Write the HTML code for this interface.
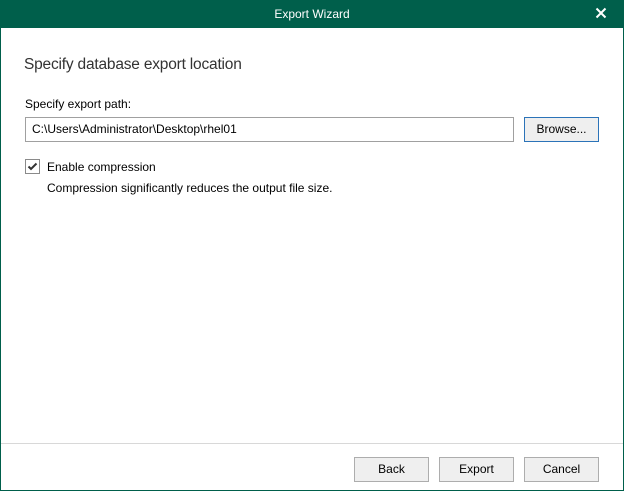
<!DOCTYPE html>
<html><head><style>
*{margin:0;padding:0;box-sizing:border-box}
body{width:624px;height:491px;background:#fff;font-family:"Segoe UI","Liberation Sans",sans-serif;font-size:12px;color:#000;position:relative;overflow:hidden}
.win{position:absolute;left:0;top:0;width:624px;height:491px;border:1px solid #005f4b}
.title{position:absolute;left:0;top:0;width:624px;height:28px;background:#005f4b;color:#fff;text-align:center;line-height:28px;font-size:12px}
.x{position:absolute;right:17px;top:7px}
.abs{position:absolute;white-space:nowrap}
.btn{position:absolute;height:25px;background:#efefef;border:1px solid #adadad;text-align:center;line-height:23px;font-size:12px}
</style></head><body>
<div class="win"></div>
<div class="title">Export Wizard
<svg class="x" width="12" height="12" viewBox="0 0 12 12"><path d="M1.5 1.5L10.5 10.5M10.5 1.5L1.5 10.5" stroke="#fff" stroke-width="2"/></svg></div>
<div class="abs" style="left:24px;top:56px;font-size:15.5px;color:#333;letter-spacing:-0.2px">Specify database export location</div>
<div class="abs" style="left:25px;top:97px">Specify export path:</div>
<div class="abs" style="left:25px;top:117px;width:489px;height:25px;border:1px solid #a0a0a0;padding-left:6px;line-height:23px">C:\Users\Administrator\Desktop\rhel01</div>
<div class="btn" style="left:524px;top:117px;width:75px;border-color:#2b73b8">Browse...</div>
<div class="abs" style="left:25px;top:159px;width:15px;height:15px;border:1px solid #8a8a8a">
<svg width="13" height="13" viewBox="0 0 13 13" style="position:absolute;left:0;top:0"><path d="M2.5 6.5L5 9L10.5 3.5" stroke="#333" stroke-width="2" fill="none"/></svg></div>
<div class="abs" style="left:47px;top:160px">Enable compression</div>
<div class="abs" style="left:47px;top:181px">Compression significantly reduces the output file size.</div>
<div class="abs" style="left:1px;top:443px;width:622px;height:1px;background:#d8d8d8"></div>
<div class="btn" style="left:354px;top:457px;width:75px">Back</div>
<div class="btn" style="left:439px;top:457px;width:75px">Export</div>
<div class="btn" style="left:524px;top:457px;width:75px">Cancel</div>
</body></html>
